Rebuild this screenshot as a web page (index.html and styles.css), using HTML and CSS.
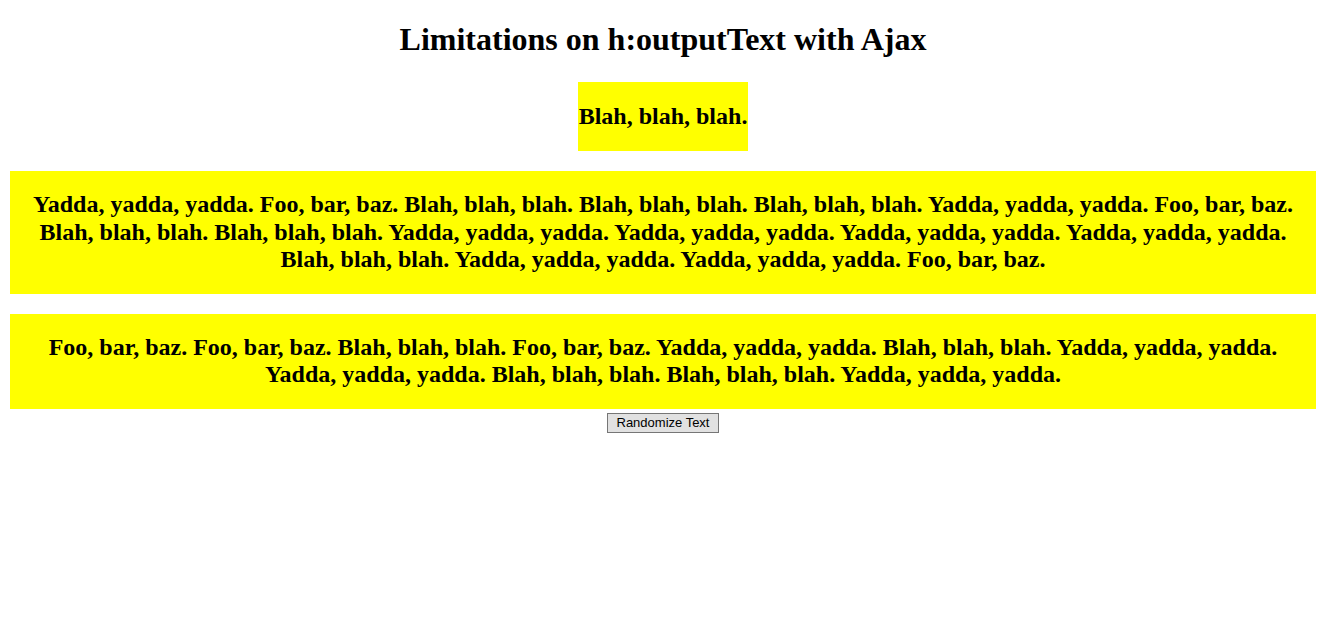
FILE: index.html
```html
<!DOCTYPE html>
<html>
<head>
<meta charset="utf-8">
<title>Limitations on h:outputText with Ajax</title>
<link rel="stylesheet" href="styles.css">
</head>
<body>
<h1 class="title">Limitations on h:outputText with Ajax</h1>
<div class="short-wrap"><h2 class="short">Blah, blah, blah.</h2></div>
<div class="box"><h2 class="box-text">Yadda, yadda, yadda. Foo, bar, baz. Blah, blah, blah. Blah, blah, blah. Blah, blah, blah. Yadda, yadda, yadda. Foo, bar, baz. Blah, blah, blah. Blah, blah, blah. Yadda, yadda, yadda. Yadda, yadda, yadda. Yadda, yadda, yadda. Yadda, yadda, yadda. Blah, blah, blah. Yadda, yadda, yadda. Yadda, yadda, yadda. Foo, bar, baz.</h2></div>
<div class="box"><h2 class="box-text">Foo, bar, baz. Foo, bar, baz. Blah, blah, blah. Foo, bar, baz. Yadda, yadda, yadda. Blah, blah, blah. Yadda, yadda, yadda. Yadda, yadda, yadda. Blah, blah, blah. Blah, blah, blah. Yadda, yadda, yadda.</h2></div>
<div class="actions"><button class="btn" type="button">Randomize Text</button></div>
</body>
</html>
```
FILE: styles.css
```css
html, body {
  margin: 0;
  padding: 0;
  background: #fff;
}
body {
  font-family: "Liberation Serif", "Times New Roman", serif;
  color: #000;
  text-align: center;
}
.title {
  font-size: 32px;
  line-height: 37px;
  font-weight: bold;
  margin: 21px 0 0;
}
.short-wrap {
  padding-top: 24px;
}
.short {
  display: inline-block;
  margin: 0;
  background: #ffff00;
  font-size: 24px;
  line-height: 28px;
  padding: 20px 1px 21px 1px;
}
.box {
  margin: 20px 10px 0;
  background: #ffff00;
  padding: 20px 0;
}
.box-text {
  margin: 0;
  padding: 0 20px;
  font-size: 24px;
  line-height: 27.6px;
}
.actions {
  padding-top: 4px;
}
.btn {
  font-family: "Liberation Sans", Arial, sans-serif;
  font-size: 13px;
  color: #000;
  background: #e1e1e1;
  border: 1px solid #767676;
  border-radius: 0;
  padding: 1px 9px 2px;
  line-height: 15px;
  margin: 0;
}
```
